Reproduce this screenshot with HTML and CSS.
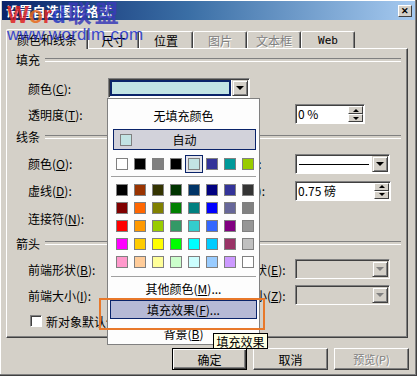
FILE: index.html
```html
<!doctype html>
<html lang="zh-CN">
<head>
<meta charset="utf-8" />
<title>设置自选图形格式</title>
<link rel="stylesheet" href="styles.css">
</head>
<body>
<div class="win">
  <div class="titlebar">
    <span class="title">设置自选图形格式</span>
    <span class="close">✕</span>
  </div>

  <div class="tabs">
    <div class="tab active">颜色和线条</div>
    <div class="tab">尺寸</div>
    <div class="tab">位置</div>
    <div class="tab off">图片</div>
    <div class="tab off">文本框</div>
    <div class="tab web">Web</div>
  </div>

  <div class="panel">
    <div class="grp">填充</div>
    <div class="row">
      <span class="lbl">颜色(<u>C</u>):</span>
      <div class="combo fillcombo"><div class="field"></div><span class="dd"></span></div>
    </div>
    <div class="row">
      <span class="lbl">透明度(<u>T</u>):</span>
      <span></span><span></span>
      <div class="spin w70"><span class="val">0 %</span><span class="arrows"><i class="up"></i><i class="down"></i></span></div>
    </div>

    <div class="grp">线条</div>
    <div class="row">
      <span class="lbl">颜色(<u>O</u>):</span>
      <span></span>
      <span class="lbl">样式(<u>S</u>):</span>
      <div class="combo line"><div class="field"><b class="stroke"></b></div><span class="dd"></span></div>
    </div>
    <div class="row">
      <span class="lbl">虚线(<u>D</u>):</span>
      <span></span>
      <span class="lbl">粗细(<u>W</u>):</span>
      <div class="spin"><span class="val">0.75 磅</span><span class="arrows"><i class="up"></i><i class="down"></i></span></div>
    </div>
    <div class="row">
      <span class="lbl">连接符(<u>N</u>):</span>
    </div>

    <div class="grp">箭头</div>
    <div class="row">
      <span class="lbl">前端形状(<u>B</u>):</span>
      <span></span>
      <span class="lbl">末端形状(<u>E</u>):</span>
      <div class="combo dis"><div class="field"></div><span class="dd"></span></div>
    </div>
    <div class="row">
      <span class="lbl">前端大小(<u>I</u>):</span>
      <span></span>
      <span class="lbl">末端大小(<u>Z</u>):</span>
      <div class="combo dis"><div class="field"></div><span class="dd"></span></div>
    </div>
    <div class="row check">
      <span class="box"></span><span>新对象默认值(<u>F</u>)</span>
    </div>
  </div>

  <div class="btns">
    <button class="default">确定</button>
    <button>取消</button>
    <button class="disabled">预览(P)</button>
  </div>

  <div class="popup">
    <div class="pitem none">无填充颜色</div>
    <div class="auto"><span class="sw" style="background:#c2e4e4"></span><span>自动</span></div>
    <div class="swrow">
      <span class="cell"><span class="sw" style="background:#ffffff"></span></span>
      <span class="cell"><span class="sw" style="background:#000000"></span></span>
      <span class="cell"><span class="sw" style="background:#808080"></span></span>
      <span class="cell"><span class="sw" style="background:#000000"></span></span>
      <span class="cell sel"><span class="sw" style="background:#c2e4e4"></span></span>
      <span class="cell"><span class="sw" style="background:#333399"></span></span>
      <span class="cell"><span class="sw" style="background:#009999"></span></span>
      <span class="cell"><span class="sw" style="background:#99cc00"></span></span>
    </div>
    <div class="sep"></div>
    <div class="swgrid" id="palette"></div>
    <div class="sep"></div>
    <div class="pitem more">其他颜色(<u>M</u>)...</div>
    <div class="pitem hot">填充效果(<u>F</u>)...</div>
    <div class="pitem bg">背景(<u>B</u>)</div>
  </div>

  <div class="ring"></div>
  <div class="tip">填充效果</div>

  <div class="mark">
    <div class="logo"><span class="r">W</span><span class="o">o</span><span class="r">r</span><span class="b">d</span><span class="cn">联盟</span></div>
    <div class="url">www.wordlm.com</div>
  </div>
</div>

<script>
  const colors = [
    "#000000","#993300","#333300","#003300","#003366","#000080","#333399","#333333",
    "#800000","#ff6600","#808000","#008000","#008080","#0000ff","#666699","#808080",
    "#ff0000","#ff9900","#99cc00","#339966","#33cccc","#3366ff","#800080","#969696",
    "#ff00ff","#ffcc00","#ffff00","#00ff00","#00ffff","#00ccff","#993366","#c0c0c0",
    "#ff99cc","#ffcc99","#ffff99","#ccffcc","#ccffff","#99ccff","#cc99ff","#ffffff"
  ];
  const grid = document.getElementById('palette');
  colors.forEach(c => {
    const cell = document.createElement('span');
    cell.className = 'cell';
    const sw = document.createElement('span');
    sw.className = 'sw';
    sw.style.background = c;
    cell.appendChild(sw);
    grid.appendChild(cell);
  });
</script>
</body>
</html>
```

FILE: styles.css
```css
*{box-sizing:border-box}
body{
margin:0;
background:#d4d0c8;
font-family:"Noto Sans CJK SC","Noto Sans",sans-serif;
font-size:12px;
color:#000;
}
u{text-decoration:underline; text-underline-offset:1px}

.win{
position:relative;
width:417px; height:376px;
overflow:hidden;
background:#d4d0c8;
box-shadow: inset -1px -1px 0 #404040, inset -2px -2px 0 #808080, inset 1px 1px 0 #fff;
}

/* title bar */
.titlebar{
height:19px;
margin:1px 2px 0 2px;
padding:0 3px 0 4px;
display:flex; align-items:center; justify-content:space-between;
background:linear-gradient(90deg,#0a246a 0%,#3a6ea5 45%,#a6caf0 100%);
}
.title{color:#fff; font-weight:bold; font-size:13px; letter-spacing:.3px}
.close{
width:14px; height:12px;
display:flex; align-items:center; justify-content:center;
background:#d4d0c8;
border:1px solid; border-color:#fff #404040 #404040 #fff;
font-size:9px; font-weight:bold; line-height:1;
}

/* tabs */
.tabs{
height:28px;
display:flex; align-items:flex-end;
padding-left:6px;
}
.tab{
height:17px;
width:54px;
display:flex; align-items:center; justify-content:center;
border:1px solid; border-bottom:0;
border-color:#fff #404040 transparent #fff;
border-radius:2px 2px 0 0;
box-shadow: inset -1px 0 0 #808080;
background:#d4d0c8;
}
.tab:nth-child(2){width:51px}
.tab.active{
width:82px; height:20px;
margin-bottom:-1px;
position:relative; z-index:2;
}
.tab.off{color:#808080; text-shadow:1px 1px 0 #fff}
.tab.web{font-family:"DejaVu Sans Mono",monospace; font-size:11px}

/* tab page */
.panel{
margin-left:6px;
width:402px; height:290px;
border:1px solid; border-color:#fff #404040 #404040 #fff;
box-shadow: inset -1px -1px 0 #808080;
display:grid;
grid-template-rows: 24px 30px 22px 26px 25px 29px 26px 27px 22px 30px 22px;
align-content:start;
}
.grp{
display:flex; align-items:center; gap:5px;
padding:0 6px 3px 9px;
}
.grp::after{
content:"";
flex:1;
height:2px;
border-top:1px solid #808080;
border-bottom:1px solid #fff;
}
.row{
display:grid;
grid-template-columns: 80px 111px 76px 110px;
align-items:center;
padding-left:21px;
}
.lbl{white-space:nowrap}

/* controls */
.combo, .spin{
height:20px;
display:flex; align-items:stretch;
border:1px solid; border-color:#808080 #fff #fff #808080;
box-shadow: inset 1px 1px 0 #404040;
background:#fff;
padding:1px;
}
.combo{width:95px}
.combo .field{flex:1; position:relative}
.dd{
width:16px;
background:#d4d0c8;
border:1px solid; border-color:#d4d0c8 #404040 #404040 #d4d0c8;
box-shadow: inset 1px 1px 0 #fff, inset -1px -1px 0 #808080;
display:flex; align-items:center; justify-content:center;
}
.dd::before{
content:"";
border-left:4px solid transparent;
border-right:4px solid transparent;
border-top:4px solid #000;
}
.fillcombo{
grid-column: 2 / span 2;
width:142px;
}
.fillcombo .field{
background:#c2e4e4;
border:2px solid #0a246a;
margin-right:1px;
}
.line .stroke{
position:absolute; left:2px; right:3px; top:8px;
height:1px; background:#000;
}
.dis{background:#d4d0c8}
.dis .dd::before{border-top-color:#808080}

.spin{width:96px; padding-left:2px}
.spin.w70{width:70px}
.spin .val{flex:1; line-height:16px; white-space:nowrap}
.arrows{width:15px; display:flex; flex-direction:column}
.arrows i{
flex:1;
background:#d4d0c8;
border:1px solid; border-color:#fff #404040 #404040 #fff;
display:flex; align-items:center; justify-content:center;
}
.arrows i::before{
content:"";
border-left:3px solid transparent;
border-right:3px solid transparent;
}
.arrows .up::before{border-bottom:3px solid #000}
.arrows .down::before{border-top:3px solid #000}

.row.check{
display:flex; align-items:center; gap:4px;
padding-left:23px;
}
.box{
width:12px; height:12px;
background:#fff;
border:1px solid; border-color:#808080 #fff #fff #808080;
box-shadow: inset 1px 1px 0 #404040;
}

/* dialog buttons */
.btns{
display:flex; gap:6px;
padding-left:172px;
margin-top:10px;
}
button{
width:75px; height:22px;
font:inherit;
background:#d4d0c8;
border:1px solid; border-color:#fff #404040 #404040 #fff;
box-shadow: inset -1px -1px 0 #808080;
padding:0;
}
button.default{
border-color:#000;
box-shadow: inset 1px 1px 0 #fff, inset -1px -1px 0 #404040, inset -2px -2px 0 #808080;
}
button.disabled{color:#808080; text-shadow:1px 1px 0 #fff; font-size:11px}

/* colour drop-down */
.popup{
position:absolute; left:107px; top:98px;
width:153px; height:247px;
background:#fdfdfd;
border:1px solid #808080;
display:flex; flex-direction:column;
overflow:hidden;
z-index:5;
}
.pitem{
display:flex; align-items:center; justify-content:center;
margin:0 2px;
}
.none{height:29px; margin-top:2px}
.auto{
height:21px;
margin:0 3px 0 5px;
background:#d2d2da;
border:1px solid #0a246a;
display:flex; align-items:center;
position:relative;
}
.auto .sw{margin-left:6px}
.auto span:last-child{position:absolute; left:0; right:0; text-align:center}
.sw{
width:12px; height:12px;
border:1px solid #808080;
display:block;
}
.swrow, .swgrid{
display:grid;
grid-template-columns:repeat(8,18px);
padding-left:5px;
}
.swrow{margin-top:5px}
.swgrid{margin-top:4px; grid-auto-rows:18px}
.cell{
height:18px;
display:flex; align-items:center; justify-content:center;
}
.cell.sel{
border:1px solid #0a246a;
background:#e4e4ea;
}
.sep{
height:1px;
margin:3px 3px 0;
background:#a0a0a0;
}
.swgrid + .sep{margin-top:5px}
.more{height:24px}
.hot{
height:19px;
margin:0 2px;
background:#b6bad6;
border:1px solid #0a246a;
}
.bg{height:22px; margin-top:3px}

/* highlight ring and tooltip */
.ring{
position:absolute; left:99px; top:298px;
width:166px; height:32px;
border:2px solid #e8782a;
z-index:6;
}
.tip{
position:absolute; left:213px; top:333px;
width:55px; height:16px;
background:#ffffe1;
border:1px solid #000;
display:flex; align-items:center; justify-content:center;
z-index:7;
}

/* site watermark */
.mark{
position:absolute; left:7px; top:1px;
z-index:8;
opacity:.85;
}
.logo{
display:flex; align-items:flex-end;
height:26px;
font-family:"Liberation Sans",Arial,sans-serif;
font-weight:bold; font-size:23px; line-height:24px;
}
.logo .r{color:#e02424}
.logo .o{color:#e86a1c}
.logo .b{color:#2438c0}
.logo .cn{
color:#3a3ab8; font-size:24px; line-height:24px;
font-family:"Noto Sans CJK SC",sans-serif;
letter-spacing:3px;
margin-left:2px; position:relative; top:-3px;
}
.url{
font-family:"Liberation Sans",Arial,sans-serif;
font-size:17px; line-height:14px;
letter-spacing:.3px;
color:#2030c8;
margin-top:1px;
}
```
